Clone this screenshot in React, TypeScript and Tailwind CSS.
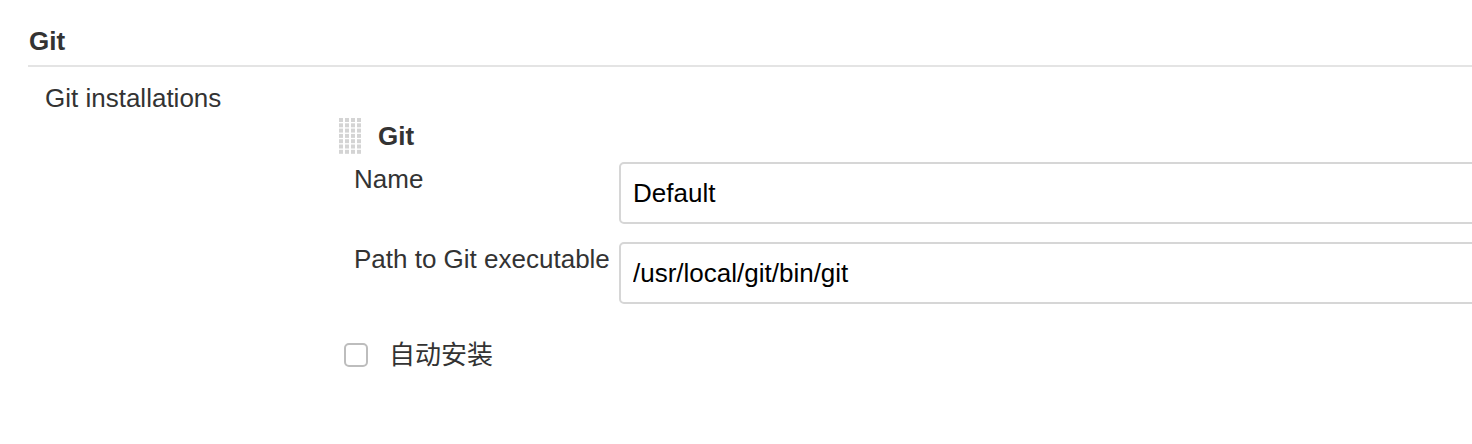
import React from "react";

function GripIcon() {
  const dots: React.ReactElement[] = [];
  for (let r = 0; r < 7; r++) {
    for (let c = 0; c < 4; c++) {
      dots.push(
        <rect key={`${r}-${c}`} x={c * 6} y={r * 5.3} width={4} height={4} fill="#d4d4d4" />
      );
    }
  }
  return (
    <svg width="24" height="36" viewBox="0 0 24 36" className="shrink-0">
      {dots}
    </svg>
  );
}

function FieldRow({ label, value }: { label: string; value: string }) {
  return (
    <div className="flex items-start">
      <div className="w-[281px] shrink-0 pl-[16px] pt-[2px] leading-[30px] whitespace-nowrap text-[#333]">{label}</div>
      <input
        readOnly
        value={value}
        className="h-[62px] min-w-[900px] flex-1 rounded-[5px] border-2 border-[#d6d6d6] bg-white px-[12px] text-[26px] text-black outline-none"
      />
    </div>
  );
}

export default function App() {
  return (
    <div
      className="h-[444px] w-full overflow-hidden bg-white text-[26px]"
      style={{ fontFamily: '"Liberation Sans", "Noto Sans CJK SC", Arial, sans-serif' }}
    >
      <div className="pl-[28px] pt-[26px]">
        {/* Section heading */}
        <h3 className="pl-[1px] text-[26px] font-bold leading-[30px] text-[#333]">Git</h3>
        <div className="mt-[9px] border-b-2 border-[#e4e4e4]" />

        <div className="mt-[16px] flex">
          <div className="w-[310px] shrink-0 pl-[17px] leading-[30px] text-[#333]">Git installations</div>

          <div className="flex flex-1 flex-col">
            {/* Repeatable item header */}
            <div className="mt-[35px] flex items-center gap-[15px] pl-[1px]">
              <GripIcon />
              <span className="font-bold leading-[30px] text-[#333]">Git</span>
            </div>

            <div className="mt-[8px] flex flex-col gap-[18px]">
              <FieldRow label="Name" value="Default" />
              <FieldRow label="Path to Git executable" value="/usr/local/git/bin/git" />
            </div>

            <label className="mt-[36px] flex items-center gap-[21px] pl-[6px]">
              <span className="h-[24px] w-[24px] rounded-[5px] border-2 border-[#bdbdbd] bg-white" />
              <span className="leading-[30px] text-[#333]">自动安装</span>
            </label>
          </div>
        </div>
      </div>
    </div>
  );
}
